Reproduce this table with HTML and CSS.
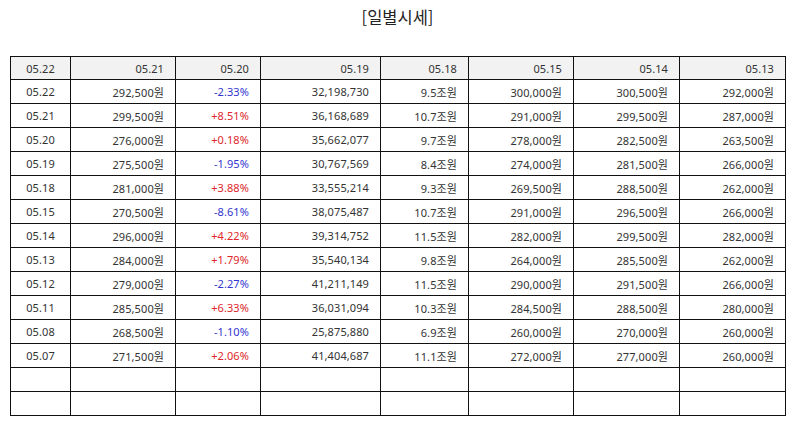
FILE: index.html
```html
<!DOCTYPE html>
<html lang="ko">
<head>
<meta charset="utf-8">
<title>일별시세</title>
<link rel="stylesheet" href="styles.css">
</head>
<body>
<div class="page">
  <h1 class="title">[일별시세]</h1>
  <table class="quotes">
    <colgroup>
      <col class="c1"><col class="c2"><col class="c3"><col class="c4"><col class="c5"><col class="c6"><col class="c7"><col class="c8">
    </colgroup>
    <thead>
      <tr><th class="center">05.22</th><th>05.21</th><th>05.20</th><th>05.19</th><th>05.18</th><th>05.15</th><th>05.14</th><th>05.13</th></tr>
    </thead>
    <tbody>
      <tr><td class="center">05.22</td><td>292,500원</td><td class="down">-2.33%</td><td>32,198,730</td><td>9.5조원</td><td>300,000원</td><td>300,500원</td><td>292,000원</td></tr>
      <tr><td class="center">05.21</td><td>299,500원</td><td class="up">+8.51%</td><td>36,168,689</td><td>10.7조원</td><td>291,000원</td><td>299,500원</td><td>287,000원</td></tr>
      <tr><td class="center">05.20</td><td>276,000원</td><td class="up">+0.18%</td><td>35,662,077</td><td>9.7조원</td><td>278,000원</td><td>282,500원</td><td>263,500원</td></tr>
      <tr><td class="center">05.19</td><td>275,500원</td><td class="down">-1.95%</td><td>30,767,569</td><td>8.4조원</td><td>274,000원</td><td>281,500원</td><td>266,000원</td></tr>
      <tr><td class="center">05.18</td><td>281,000원</td><td class="up">+3.88%</td><td>33,555,214</td><td>9.3조원</td><td>269,500원</td><td>288,500원</td><td>262,000원</td></tr>
      <tr><td class="center">05.15</td><td>270,500원</td><td class="down">-8.61%</td><td>38,075,487</td><td>10.7조원</td><td>291,000원</td><td>296,500원</td><td>266,000원</td></tr>
      <tr><td class="center">05.14</td><td>296,000원</td><td class="up">+4.22%</td><td>39,314,752</td><td>11.5조원</td><td>282,000원</td><td>299,500원</td><td>282,000원</td></tr>
      <tr><td class="center">05.13</td><td>284,000원</td><td class="up">+1.79%</td><td>35,540,134</td><td>9.8조원</td><td>264,000원</td><td>285,500원</td><td>262,000원</td></tr>
      <tr><td class="center">05.12</td><td>279,000원</td><td class="down">-2.27%</td><td>41,211,149</td><td>11.5조원</td><td>290,000원</td><td>291,500원</td><td>266,000원</td></tr>
      <tr><td class="center">05.11</td><td>285,500원</td><td class="up">+6.33%</td><td>36,031,094</td><td>10.3조원</td><td>284,500원</td><td>288,500원</td><td>280,000원</td></tr>
      <tr><td class="center">05.08</td><td>268,500원</td><td class="down">-1.10%</td><td>25,875,880</td><td>6.9조원</td><td>260,000원</td><td>270,000원</td><td>260,000원</td></tr>
      <tr><td class="center">05.07</td><td>271,500원</td><td class="up">+2.06%</td><td>41,404,687</td><td>11.1조원</td><td>272,000원</td><td>277,000원</td><td>260,000원</td></tr>
      <tr><td></td><td></td><td></td><td></td><td></td><td></td><td></td><td></td></tr>
      <tr><td></td><td></td><td></td><td></td><td></td><td></td><td></td><td></td></tr>
    </tbody>
  </table>
</div>
</body>
</html>
```

FILE: styles.css
```css
html, body {
  margin: 0;
  padding: 0;
  background: #ffffff;
}

.page {
  padding: 0 9px 0 10px;
  font-family: "Noto Sans", "Noto Sans CJK KR", sans-serif;
  color: #333333;
}

.title {
  margin: 0;
  height: 56px;
  padding-top: 5px;
  box-sizing: border-box;
  text-align: center;
  font-family: "Noto Sans CJK KR", sans-serif;
  font-weight: 400;
  font-size: 16.5px;
  line-height: 24px;
  color: #222222;
}

.quotes {
  width: 775px;
  border-collapse: collapse;
  table-layout: fixed;
  font-size: 11px;
  border: 1px solid #111111;
}

.c1 { width: 60px; }
.c2 { width: 105px; }
.c3 { width: 85px; }
.c4 { width: 120px; }
.c5 { width: 88px; }
.c6 { width: 105px; }
.c7 { width: 106px; }
.c8 { width: 106px; }

.quotes th,
.quotes td {
  border: 1px solid #111111;
  padding: 0 11px 0 4px;
  text-align: right;
  font-weight: 400;
  white-space: nowrap;
  color: #333333;
  letter-spacing: 0.1px;
}

.quotes thead tr { height: 23px; }
.quotes tbody tr { height: 24px; }

.quotes th {
  background: #f2f2f2;
}

.quotes .center {
  text-align: center;
  padding: 0;
}

.quotes .up { color: #e0262b; }
.quotes .down { color: #3236cf; }
```
